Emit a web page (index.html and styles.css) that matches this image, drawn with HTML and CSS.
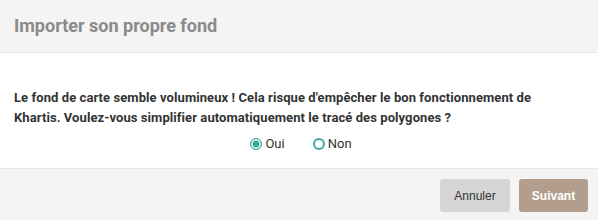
FILE: index.html
```html
<!DOCTYPE html>
<html lang="fr">
<head>
<meta charset="utf-8">
<link rel="stylesheet" href="styles.css">
</head>
<body>
<div class="modal">
  <div class="modal-header">
    <h2 class="modal-title">Importer son propre fond</h2>
  </div>
  <div class="modal-body">
    <p class="message">Le fond de carte semble volumineux ! Cela risque d'empêcher le bon fonctionnement de Khartis. Voulez-vous simplifier automatiquement le tracé des polygones ?</p>
    <div class="choices">
      <label class="choice"><span class="radio checked"></span>Oui</label>
      <label class="choice"><span class="radio"></span>Non</label>
    </div>
  </div>
  <div class="modal-footer">
    <button class="btn btn-cancel">Annuler</button>
    <button class="btn btn-next">Suivant</button>
  </div>
</div>
</body>
</html>
```

FILE: styles.css
```css
html, body {
  margin: 0;
  padding: 0;
  background: #fff;
}
.modal {
  width: 598px;
  height: 220px;
  display: flex;
  flex-direction: column;
  font-family: Roboto, "Liberation Sans", sans-serif;
}
.modal-header {
  height: 52px;
  background: #f4f4f4;
  border-bottom: 1px solid #e6e6e6;
  display: flex;
  align-items: center;
  padding: 0 14px;
  box-sizing: content-box;
}
.modal-title {
  margin: 0;
  font-size: 18px;
  font-weight: 700;
  color: #8a8a8a;
  padding-bottom: 2px;
}
.modal-body {
  height: 115px;
  padding: 35px 60px 0 14px;
  box-sizing: border-box;
}
.message {
  margin: 0;
  font-size: 13px;
  font-weight: 700;
  line-height: 20px;
  letter-spacing: 0.08px;
  color: #333;
}
.choices {
  display: flex;
  justify-content: center;
  gap: 28px;
  margin-top: 8px;
  padding-left: 50px;
}
.choice {
  display: flex;
  align-items: center;
  gap: 3px;
  font-size: 13px;
  color: #333;
}
.radio {
  width: 12px;
  height: 12px;
  box-sizing: border-box;
  border-radius: 50%;
  border: 2.5px solid #3aa99b;
  background: #fff;
}
.radio.checked {
  border: 1.5px solid #3aa99b;
  background: #3aa99b;
  box-shadow: inset 0 0 0 1.5px #fff;
}
.modal-footer {
  flex: 1;
  background: #f4f4f4;
  border-top: 1px solid #e6e6e6;
  display: flex;
  justify-content: flex-end;
  align-items: flex-start;
  gap: 9px;
  padding: 10px 10px 0;
}
.btn {
  height: 33px;
  border: none;
  border-radius: 3px;
  font-family: "Liberation Sans", Arial, sans-serif;
  font-size: 12px;
  padding: 0;
}
.btn-cancel {
  width: 70px;
  background: #d5d5d5;
  color: #333;
}
.btn-next {
  width: 69px;
  background: #b39e8d;
  color: #fff;
  font-weight: 700;
}
```
